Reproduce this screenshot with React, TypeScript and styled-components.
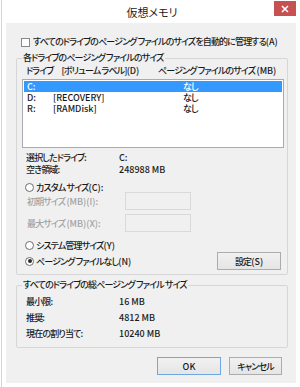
import { Fragment } from "react";
import styled, { createGlobalStyle } from "styled-components";

const GlobalStyle = createGlobalStyle`
  html, body {
    margin: 0;
    padding: 0;
    background: #ffffff;
  }
  body {
    font-family: "Noto Sans CJK JP", "Noto Sans", sans-serif;
    font-feature-settings: "palt";
    font-size: 9px;
    font-weight: 500;
    letter-spacing: -0.85px;
    color: #1a1a1a;
  }
`;

const Window = styled.div`
  width: 299px;
  height: 387px;
  margin-left: 1px;
  border-left: 1px solid #d4d4d4;
  box-sizing: border-box;
  background: #ffffff;
  display: flex;
  flex-direction: column;
`;

const TitleBar = styled.div`
  height: 23px;
  display: grid;
  grid-template-columns: 26px 1fr 26px;
  align-items: start;
`;

const Title = styled.div`
  grid-column: 2;
  text-align: center;
  font-size: 11px;
  font-weight: 400;
  letter-spacing: 0;
  line-height: 13px;
  margin-top: 6px;
  margin-left: 2px;
`;

const CloseButton = styled.div`
  grid-column: 3;
  width: 22px;
  height: 15px;
  margin-top: 1px;
  background: #c75050;
  display: flex;
  align-items: center;
  justify-content: center;
`;

const Body = styled.div`
  flex: 1;
  margin: 0 4px 4px 4px;
  background: #f0f0f0;
  padding: 13px 8px 0 10px;
  display: flex;
  flex-direction: column;
`;

const CheckRow = styled.label`
  display: flex;
  align-items: center;
  gap: 3px;
  height: 12px;
  line-height: 12px;
  padding-left: 5px;
  white-space: nowrap;
`;

const CheckBox = styled.span`
  width: 9px;
  height: 9px;
  box-sizing: border-box;
  border: 1px solid #8a8a8a;
  background: #fdfdfd;
  flex: none;
`;

const Group = styled.fieldset<{ $top: number; $bottom: number }>`
  margin: ${({ $top }) => $top}px 0 0 0;
  padding: 0 3px ${({ $bottom }) => $bottom}px 5px;
  border: 1px solid #d6d6d6;
  border-radius: 2px;
  min-width: 0;
`;

const Legend = styled.legend`
  padding: 0 1px;
  line-height: 12px;
  white-space: nowrap;
`;

const ColumnsHeader = styled.div`
  display: grid;
  grid-template-columns: 132px 1fr;
  padding-left: 4px;
  height: 12px;
  line-height: 12px;
  margin-top: 1px;
  white-space: nowrap;
`;

const ListBox = styled.div`
  margin-top: 2px;
  height: 69px;
  box-sizing: border-box;
  border: 1px solid #a8abb0;
  background: #ffffff;
  padding: 1px 1px 0 1px;
`;

const ListRow = styled.div<{ $selected?: boolean }>`
  display: grid;
  grid-template-columns: 26px 130px 1fr;
  height: 11px;
  line-height: 11px;
  padding-left: 3px;
  white-space: nowrap;
  overflow: hidden;
  background: ${({ $selected }) => ($selected ? "#3399ff" : "transparent")};
  color: ${({ $selected }) => ($selected ? "#ffffff" : "#1a1a1a")};
`;

const Latin = styled.span`
  letter-spacing: 0;
`;

const InfoGrid = styled.div<{ $pitch: number; $top: number }>`
  display: grid;
  grid-template-columns: 93px 1fr;
  grid-auto-rows: ${({ $pitch }) => $pitch}px;
  align-items: center;
  margin-top: ${({ $top }) => $top}px;
  padding-left: 4px;
  white-space: nowrap;
`;

const RadioRow = styled.div<{ $top: number }>`
  display: flex;
  align-items: center;
  gap: 2px;
  height: 12px;
  margin-top: ${({ $top }) => $top}px;
  padding-left: 3px;
  white-space: nowrap;
`;

const Radio = styled.span<{ $checked?: boolean }>`
  width: 9px;
  height: 9px;
  box-sizing: border-box;
  border-radius: 50%;
  border: 1px solid #6e6e6e;
  background: #ffffff;
  display: flex;
  align-items: center;
  justify-content: center;
  flex: none;

  &::after {
    content: "";
    width: 4px;
    height: 4px;
    border-radius: 50%;
    background: ${({ $checked }) => ($checked ? "#2b2b2b" : "transparent")};
  }
`;

const SizeRow = styled.div<{ $top: number }>`
  display: grid;
  grid-template-columns: 98px 66px;
  align-items: center;
  height: 18px;
  margin-top: ${({ $top }) => $top}px;
  padding-left: 5px;
  color: #a3a3a3;
  white-space: nowrap;
`;

const SizeInput = styled.div`
  height: 18px;
  box-sizing: border-box;
  border: 1px solid #d9d9d9;
  background: #f0f0f0;
`;

const LastRow = styled.div`
  display: flex;
  align-items: center;
  justify-content: space-between;
  margin-top: 1px;
  padding-right: 3px;
`;

const Button = styled.div<{ $default?: boolean; $width: number }>`
  width: ${({ $width }) => $width}px;
  height: 18px;
  box-sizing: border-box;
  border: 1px solid ${({ $default }) => ($default ? "#6fa7e0" : "#acacac")};
  background: linear-gradient(#f1f1f1, #e5e5e5);
  display: flex;
  align-items: center;
  justify-content: center;
  white-space: nowrap;
`;

const ButtonBar = styled.div`
  display: flex;
  justify-content: flex-end;
  gap: 8px;
  margin-top: 9px;
  padding-right: 6px;
`;

const drives = [
  { drive: "C:", label: "", size: "なし", selected: true },
  { drive: "D:", label: "[RECOVERY]", size: "なし" },
  { drive: "R:", label: "[RAMDisk]", size: "なし" },
];

const totals = [
  { label: "最小限:", value: "16 MB" },
  { label: "推奨:", value: "4812 MB" },
  { label: "現在の割り当て:", value: "10240 MB" },
];

export default function App() {
  return (
    <>
      <GlobalStyle />
      <Window>
        <TitleBar>
          <Title>仮想メモリ</Title>
          <CloseButton>
            <svg width="8" height="8" viewBox="0 0 8 8">
              <path d="M1 1 L7 7 M7 1 L1 7" stroke="#ffffff" strokeWidth="1.6" />
            </svg>
          </CloseButton>
        </TitleBar>
        <Body>
          <CheckRow>
            <CheckBox />
            <span>
              すべてのドライブのページング ファイルのサイズを自動的に管理する
              <Latin>(A)</Latin>
            </span>
          </CheckRow>

          <Group $top={4} $bottom={4}>
            <Legend>各ドライブのページング ファイルのサイズ</Legend>
            <ColumnsHeader>
              <span>
                ドライブ　[ボリューム ラベル]<Latin>(D)</Latin>
              </span>
              <span>
                ページング ファイルのサイズ <Latin>(MB)</Latin>
              </span>
            </ColumnsHeader>
            <ListBox>
              {drives.map((d) => (
                <ListRow key={d.drive} $selected={d.selected}>
                  <Latin>{d.drive}</Latin>
                  <Latin>{d.label}</Latin>
                  <span>{d.size}</span>
                </ListRow>
              ))}
            </ListBox>

            <InfoGrid $pitch={12} $top={3}>
              <span>選択したドライブ:</span>
              <Latin>C:</Latin>
              <span>空き領域:</span>
              <Latin>248988 MB</Latin>
            </InfoGrid>

            <RadioRow $top={6}>
              <Radio />
              <span>
                カスタム サイズ<Latin>(C):</Latin>
              </span>
            </RadioRow>
            <SizeRow $top={-1}>
              <span>
                初期サイズ <Latin>(MB)(I):</Latin>
              </span>
              <SizeInput />
            </SizeRow>
            <SizeRow $top={4}>
              <span>
                最大サイズ <Latin>(MB)(X):</Latin>
              </span>
              <SizeInput />
            </SizeRow>

            <RadioRow $top={7}>
              <Radio />
              <span>
                システム管理サイズ<Latin>(Y)</Latin>
              </span>
            </RadioRow>
            <LastRow>
              <RadioRow $top={0}>
                <Radio $checked />
                <span>
                  ページング ファイルなし<Latin>(N)</Latin>
                </span>
              </RadioRow>
              <Button $width={64}>
                設定<Latin>(S)</Latin>
              </Button>
            </LastRow>
          </Group>

          <Group $top={4} $bottom={6}>
            <Legend>すべてのドライブの総ページング ファイル サイズ</Legend>
            <InfoGrid $pitch={16} $top={2}>
              {totals.map((t) => (
                <Fragment key={t.label}>
                  <span>{t.label}</span>
                  <Latin>{t.value}</Latin>
                </Fragment>
              ))}
            </InfoGrid>
          </Group>

          <ButtonBar>
            <Button $default $width={64}>
              <Latin>OK</Latin>
            </Button>
            <Button $width={53}>キャンセル</Button>
          </ButtonBar>
        </Body>
      </Window>
    </>
  );
}
